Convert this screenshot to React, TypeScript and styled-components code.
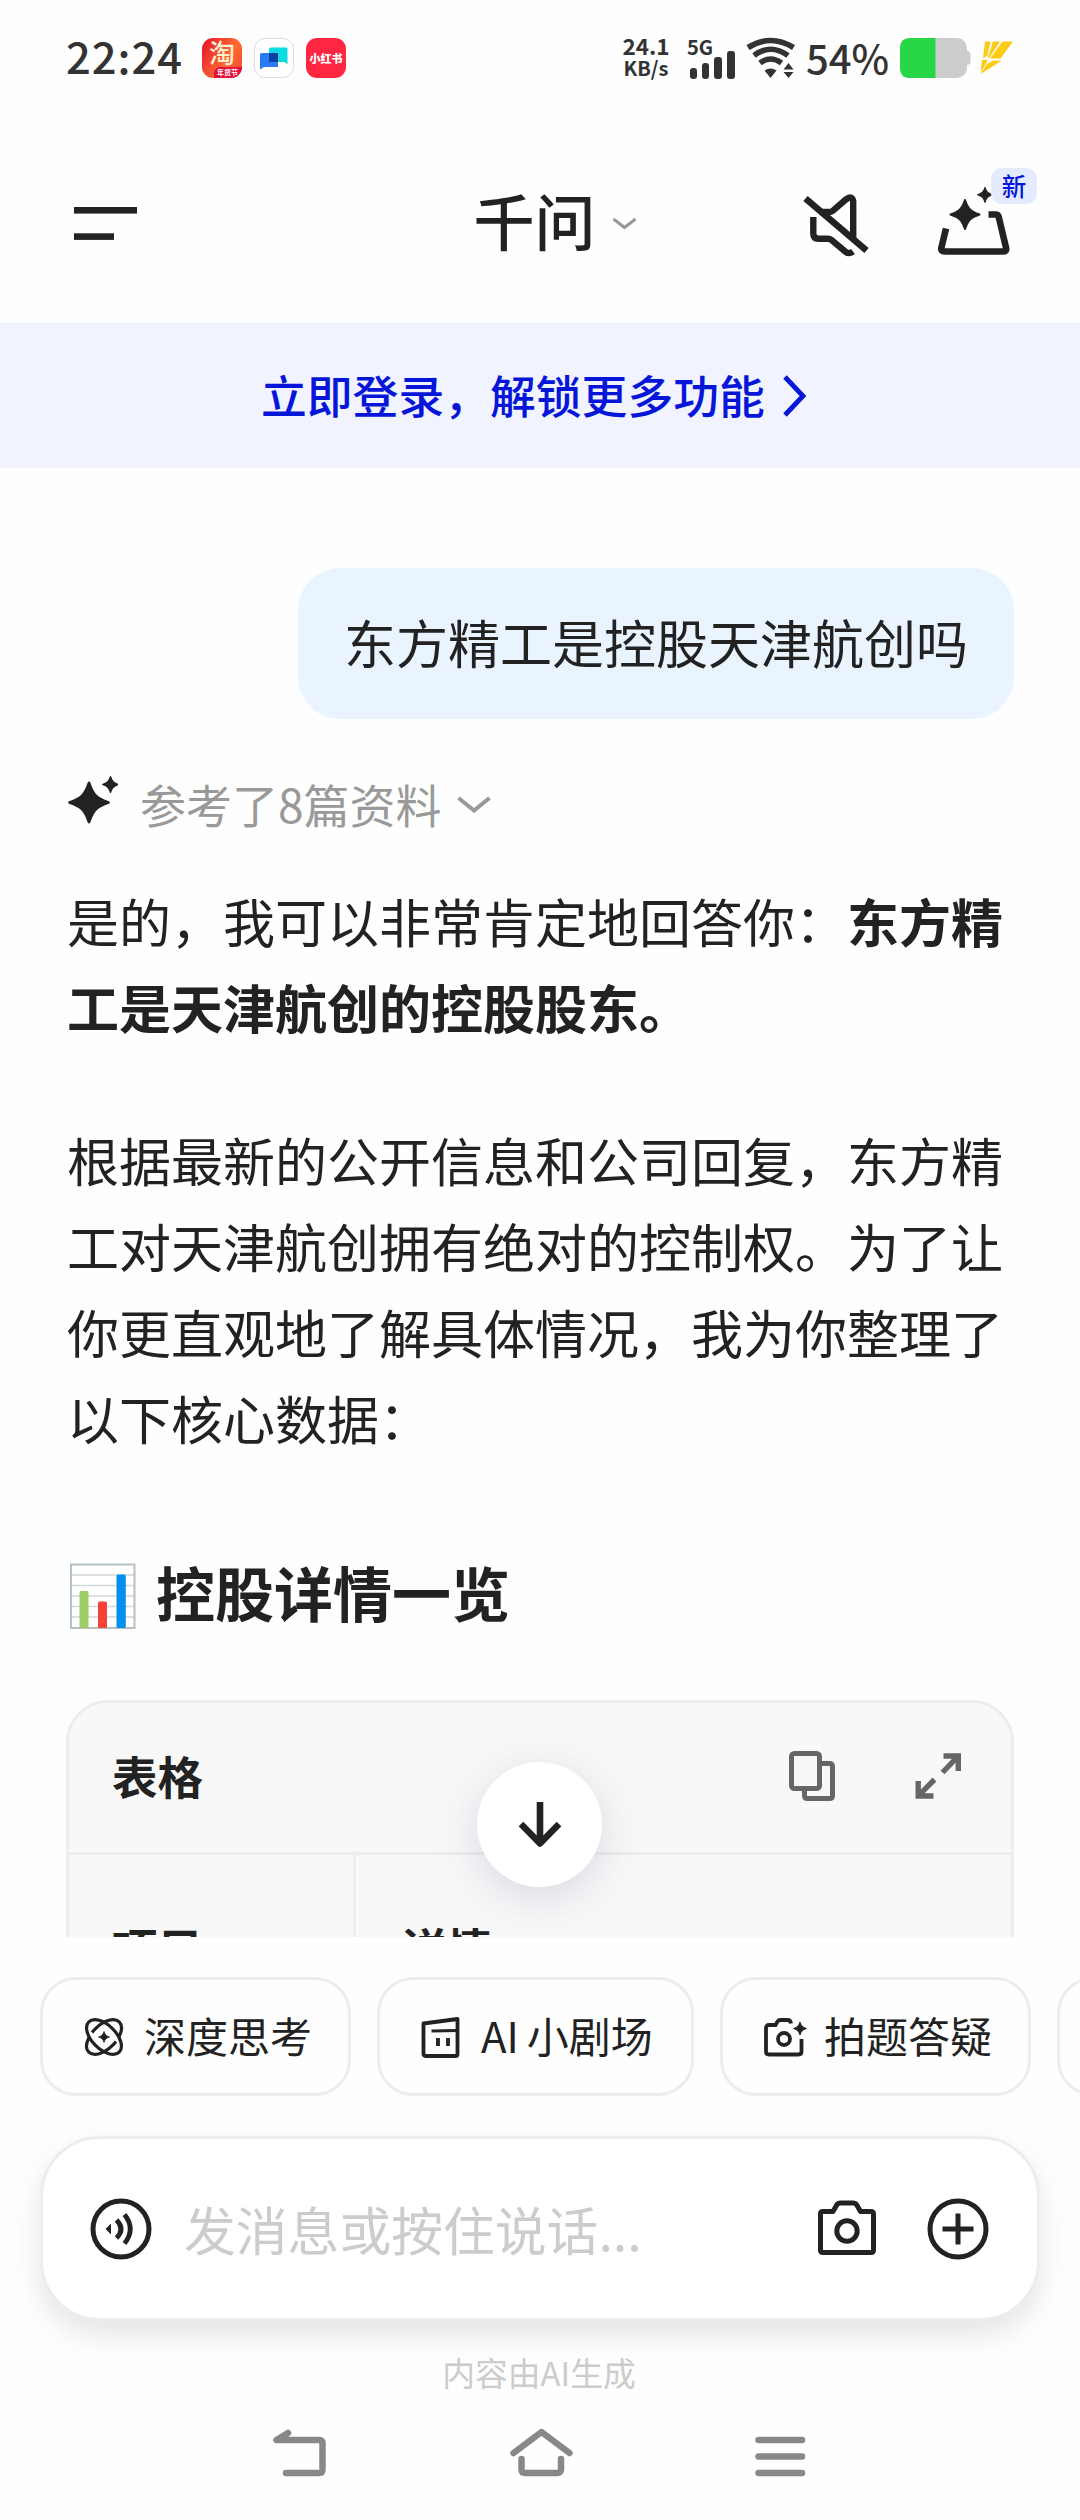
import React from "react";
import styled, { createGlobalStyle } from "styled-components";

const ink = "#222222";
const line = "#ededed";

const GlobalStyle = createGlobalStyle`
  * { box-sizing: border-box; }
  body {
    margin: 0;
    background: #fff;
    color: ${ink};
    font-family: "Noto Sans CJK SC", "Noto Sans", sans-serif;
  }
  svg { display: block; flex: none; }
`;

const Screen = styled.main`
  width: 1080px;
  height: 2520px;
  display: flex;
  flex-direction: column;
  overflow: hidden;
  background: #fefefe;
`;

/* Status bar */
const StatusBar = styled.div`
  height: 116px;
  padding: 0 66px;
  display: flex;
  justify-content: space-between;
  align-items: center;
  color: #333;
`;
const StatusGroup = styled.div`
  display: flex;
  align-items: center;
  height: 116px;
`;
const Clock = styled.span`
  width: 136px;
  padding-bottom: 5px;
  font-size: 43.5px;
  font-weight: 500;
  line-height: 64px;
  letter-spacing: 1px;
  white-space: nowrap;
`;
const AppIcon = styled.span<{ $bg: string; $ring?: boolean }>`
  width: 40px;
  height: 40px;
  margin-right: 12px;
  border-radius: 11px;
  overflow: hidden;
  background: ${(p) => p.$bg};
  border: ${(p) => (p.$ring ? "1px solid #ddd" : "0")};
  display: flex;
  flex-direction: column;
  align-items: center;
  justify-content: center;
`;
const TaoGlyph = styled.span`
  height: 29px;
  font-size: 26px;
  line-height: 28px;
  font-weight: 500;
  color: #fff0cf;
`;
const TaoTag = styled.span`
  align-self: flex-end;
  width: 28px;
  height: 11px;
  padding-left: 3px;
  border-top-left-radius: 6px;
  background: #e3103c;
  color: #fff;
  font-size: 7px;
  line-height: 10px;
  font-weight: 700;
  white-space: nowrap;
`;
const RedGlyph = styled.span`
  font-size: 11px;
  line-height: 18px;
  font-weight: 900;
  color: #fff;
  white-space: nowrap;
`;
const NetSpeed = styled.span`
  display: flex;
  flex-direction: column;
  align-items: center;
  width: 48px;
  margin-right: 17px;
  padding-bottom: 5px;
  font-weight: 700;
  font-size: 22.5px;
  line-height: 24px;
  white-space: nowrap;
`;
const NetUnit = styled.span`
  font-size: 20px;
  line-height: 22px;
`;
const Signal = styled.span`
  width: 48px;
  margin-right: 11px;
  display: flex;
  flex-direction: column;
`;
const SignalLabel = styled.span`
  height: 13px;
  font-size: 20px;
  line-height: 17px;
  font-weight: 700;
`;
const Percent = styled.span`
  width: 104px;
  padding: 0 0 3px 10px;
  font-size: 40px;
  line-height: 60px;
  font-weight: 500;
  white-space: nowrap;
`;

/* App header */
const Header = styled.header`
  height: 207px;
  padding: 0 70px 0 74px;
  display: grid;
  grid-template-columns: 1fr auto 1fr;
  align-items: start;
`;
const MenuButton = styled.div`
  padding-top: 90px;
`;
const TitleBox = styled.div`
  display: flex;
  gap: 16px;
  align-items: center;
  padding: 62px 0 0 26px;
  height: 152px;
`;
const Title = styled.h1`
  margin: 0;
  padding-bottom: 6px;
  font-size: 61px;
  line-height: 90px;
  font-weight: 500;
`;
const HeaderActions = styled.div`
  display: flex;
  justify-content: flex-end;
  gap: 68px;
  padding-top: 70px;
`;
const TrayButton = styled.div`
  position: relative;
`;
const NewBadge = styled.span`
  position: absolute;
  left: 53px;
  top: -18px;
  width: 46px;
  height: 36px;
  border-radius: 11px;
  background: #e5ebfe;
  color: #0616d8;
  font-size: 24.5px;
  line-height: 35px;
  font-weight: 500;
  text-align: center;
`;

const LoginBanner = styled.div`
  height: 145px;
  padding-left: 261px;
  display: flex;
  align-items: center;
  gap: 17px;
  background: #f1f3ff;
  color: #0616d8;
  font-size: 45.8px;
  line-height: 68px;
  font-weight: 500;
  white-space: nowrap;
`;
const BannerText = styled.span`
  padding-bottom: 3px;
`;

/* Conversation */
const Chat = styled.section`
  position: relative;
  height: 1469px;
  flex: none;
  padding: 100px 66px 0;
  overflow: hidden;
`;
const Bubble = styled.div`
  width: fit-content;
  height: 151px;
  margin-left: auto;
  padding: 0 46px;
  border-radius: 42px;
  background: #eaf4ff;
  font-size: 52px;
  line-height: 148px;
  white-space: nowrap;
`;
const Sources = styled.div`
  height: 70px;
  margin-top: 50px;
  display: flex;
  align-items: center;
  color: #999;
  font-size: 46px;
  line-height: 66px;
  white-space: nowrap;
`;
const SparkBox = styled.span`
  padding-bottom: 11px;
`;
const SourcesText = styled.span`
  margin: 0 15px 0 22px;
  padding-bottom: 2px;
`;
const Paragraph = styled.p<{ $top: number }>`
  margin: ${(p) => p.$top}px 0 0 1px;
  font-size: 52px;
  line-height: 86px;
`;
const Strong = styled.strong`
  font-weight: 700;
`;
const SectionTitle = styled.h2`
  margin: 86px 0 0 3px;
  height: 90px;
  display: flex;
  align-items: center;
  gap: 19px;
  font-size: 59px;
  line-height: 86px;
  font-weight: 700;
  & > svg {
    margin-top: 10px;
  }
`;
const TableCard = styled.div`
  margin-top: 63px;
  height: 320px;
  border: 3px solid ${line};
  border-radius: 42px 42px 0 0;
  background: #f8f8f8;
  font-size: 45.5px;
  font-weight: 700;
`;
const TableHead = styled.div`
  height: 152px;
  padding: 0 49px 0 43px;
  display: flex;
  justify-content: space-between;
  border-bottom: 3px solid ${line};
  line-height: 144px;
`;
const TableTools = styled.div`
  display: flex;
  gap: 80px;
  padding-top: 48px;
`;
const TableRow = styled.div`
  display: grid;
  grid-template-columns: 284px 1fr;
  height: 165px;
`;
const Cell = styled.div`
  padding: 57px 0 0 43px;
  line-height: 70px;
  & + & {
    padding-left: 45px;
    border-left: 3px solid ${line};
  }
`;
const ScrollDown = styled.div`
  position: absolute;
  left: 477px;
  top: 1294px;
  width: 125px;
  height: 125px;
  border-radius: 50%;
  background: #fff;
  box-shadow: 0 10px 44px rgba(60, 70, 130, 0.17);
  display: flex;
  align-items: center;
  justify-content: center;
`;

/* Composer */
const Chips = styled.div`
  height: 119px;
  margin: 40px 0 0 40px;
  display: flex;
  gap: 26px;
  flex: none;
`;
const Chip = styled.div<{ $w: number; $gap?: number }>`
  flex: none;
  width: ${(p) => p.$w}px;
  height: 119px;
  padding-left: 41px;
  display: flex;
  align-items: center;
  gap: ${(p) => p.$gap ?? 20}px;
  border: 3px solid ${line};
  border-radius: 36px;
  font-size: 42px;
  line-height: 60px;
  white-space: nowrap;
`;
const ChipText = styled.span`
  padding-bottom: 3px;
`;
const ChipLatin = styled.span`
  margin-right: 8px;
`;
const Composer = styled.div`
  flex: none;
  width: 1000px;
  height: 185px;
  margin: 40px 0 0 40px;
  padding: 0 48px 0 47px;
  display: flex;
  align-items: center;
  border: 3px solid ${line};
  border-radius: 60px;
  background: #fff;
  box-shadow: 0 14px 30px rgba(0, 0, 0, 0.1);
`;
const Placeholder = styled.span`
  flex: 1;
  padding-left: 32px;
  color: #ccc;
  font-size: 51.8px;
  line-height: 80px;
  white-space: nowrap;
`;
const ComposerTools = styled.div`
  display: flex;
  gap: 50px;
`;
const Disclaimer = styled.div`
  height: 50px;
  margin-top: 26px;
  padding-right: 2px;
  text-align: center;
  color: #ccc;
  font-size: 32.8px;
  line-height: 50px;
`;
const NavBar = styled.nav`
  height: 60px;
  margin-top: 26px;
  padding: 0 272px 0 271px;
  display: flex;
  justify-content: space-between;
  align-items: center;
`;

const Star = ({ cx, cy, r, fill = ink }: { cx: number; cy: number; r: number; fill?: string }) => {
  const k = r * 0.27;
  return (
    <path
      fill={fill}
      stroke={fill}
      strokeWidth={r * 0.14}
      strokeLinejoin="round"
      d={`M${cx} ${cy - r}C${cx + k * 0.8} ${cy - k * 1.4} ${cx + k * 1.4} ${cy - k * 0.8} ${cx + r} ${cy}C${cx + k * 1.4} ${cy + k * 0.8} ${cx + k * 0.8} ${cy + k * 1.4} ${cx} ${cy + r}C${cx - k * 0.8} ${cy + k * 1.4} ${cx - k * 1.4} ${cy + k * 0.8} ${cx - r} ${cy}C${cx - k * 1.4} ${cy - k * 0.8} ${cx - k * 0.8} ${cy - k * 1.4} ${cx} ${cy - r}Z`}
    />
  );
};

const SignalBars = () => (
  <svg width="48" height="28" viewBox="0 0 48 28" fill="#333">
    <rect x="3" y="17" width="7" height="11" rx="3" />
    <rect x="15" y="12" width="7" height="16" rx="3" />
    <rect x="27" y="6" width="8" height="22" rx="3" />
    <rect x="40" y="0" width="8" height="28" rx="3" />
  </svg>
);

const Wifi = () => (
  <svg width="50" height="42" viewBox="0 0 50 42" fill="none" stroke="#333" strokeWidth="5.6">
    <path d="M2 10.500Q24.500 -3.500 47.500 10.500" />
    <path d="M8 18.500Q24.500 6 42 18.500" />
    <path d="M14 26Q24.500 18 35.500 26" />
    <path d="M18.500 33.500Q24.500 29.500 30.500 33.500L24.500 41Z" fill="#333" stroke="none" />
    <path d="M42.500 26L47.500 32.500H37.500ZM42.500 41L37.500 35H47.500Z" fill="#333" stroke="none" />
  </svg>
);

const Battery = () => (
  <svg width="80" height="40" viewBox="0 0 80 40">
    <rect x="0" y="0" width="67" height="40" rx="10" fill="#ccc" />
    <path d="M67 13q3.500 0 3.500 4v6q0 4-3.500 4z" fill="#ccc" />
    <path d="M10 0H35.500V40H10Q0 40 0 30V10Q0 0 10 0Z" fill="#28d745" />
  </svg>
);

const Bolt = () => (
  <svg width="34" height="34" viewBox="0 0 34 34" fill="#fccb16">
    <path d="M5 0.500H10.500L7.500 14.500L3 17.500Z" />
    <path d="M13 0.500H20L9 17.500L8 16Z" />
    <path d="M22.500 0.500H33L20.500 17.500H10Z" />
    <path d="M22 19.500L0.500 33L7 23L13 19.500Z" />
    <path d="M2 19H8L0.500 32Z" />
  </svg>
);

const ChatLogo = () => (
  <svg width="28" height="23" viewBox="0 0 28 23">
    <path d="M0 7.500Q0 6 1.500 6H18V20H4L0 22.500Z" fill="#2a7cf6" />
    <path d="M9 2.500Q9 0.500 11 0.500H26Q27.500 0.500 27.500 2V17L24 15H9Z" fill="#0bdbe0" />
    <path d="M9 6H18V15H9Z" fill="#0b3fa0" />
  </svg>
);

const MutedSpeaker = () => (
  <svg width="67" height="74" viewBox="0 0 67 74" fill="none" stroke={ink} strokeWidth="6.400">
    <path d="M2.500 12.500L63.500 64.500" strokeWidth="6.600" />
    <path d="M17 26H26.500Q28.500 26 30 24.700L42.500 13.800Q48.800 8.800 50.200 15V52" />
    <path d="M10.300 31V47.500Q10.300 52.800 15.500 52.800H25Q27 52.800 28.500 54L42.500 65.700Q46 68.500 50 65.500" />
  </svg>
);

const Tray = () => (
  <svg width="72" height="70" viewBox="0 0 72 70" fill="none">
    <path
      d="M8 42.500L3.300 62Q2.800 65.500 6.500 65.500H65.500Q69 65.500 68 61.500L60.600 30.500Q60 28.500 57.500 28.500H50.500"
      stroke={ink}
      strokeWidth="6.600"
    />
    <Star cx={27} cy={28.5} r={14.5} />
    <Star cx={47} cy={8.8} r={7.5} />
  </svg>
);

const Chevron = ({ w, h, sw }: { w: number; h: number; sw: number }) => (
  <svg width={w} height={h} viewBox={`0 0 ${w} ${h}`} fill="none" stroke="#999" strokeWidth={sw}>
    <path d={`M1.500 2L${w / 2} ${h - 2.5}L${w - 1.5} 2`} />
  </svg>
);

const SparkLogo = () => (
  <svg width="52" height="50" viewBox="0 0 52 50">
    <Star cx={23} cy={28.5} r={19.5} />
    <Star cx={44.5} cy={10.5} r={8} />
  </svg>
);

const BarChartEmoji = () => (
  <svg width="68" height="68" viewBox="0 0 68 68">
    <rect x="1" y="1" width="65" height="65" fill="#fff" />
    <path d="M1 12H66M1 22.500H66M1 33H66M1 43.500H66M1 54H66" stroke="#cfd8dc" strokeWidth="1.600" />
    <path d="M2 1.500H65.500V65H2Z" fill="none" stroke="#b4c0c6" strokeWidth="2" />
    <rect x="10.500" y="28" width="9" height="37" rx="1.500" fill="#9ccc65" />
    <rect x="29" y="38.500" width="9" height="26.500" rx="1.500" fill="#f44336" />
    <rect x="47.500" y="11.500" width="9.300" height="53.500" rx="1.500" fill="#0390ee" />
  </svg>
);

const CopyIcon = () => (
  <svg width="46" height="50" viewBox="0 0 46 50" fill="none" stroke="#666" strokeWidth="5">
    <rect x="2.500" y="2.500" width="28" height="35" rx="3" />
    <path d="M33 12.500H40.500Q43.500 12.500 43.500 15.500V44.500Q43.500 47.500 40.500 47.500H18.500Q15.500 47.500 15.500 44.500V40" />
  </svg>
);

const ExpandIcon = () => (
  <svg width="47" height="50" viewBox="0 0 47 50" fill="none" stroke="#666" strokeWidth="5.400">
    <path d="M28.500 5H43.300V20M43 5.300L27.500 21.500" />
    <path d="M3.200 30V45H18.500M3.500 44.700L19.500 28.500" />
  </svg>
);

const ArrowDown = () => (
  <svg width="44" height="48" viewBox="0 0 44 48" fill="none" stroke={ink} strokeWidth="6.600">
    <path d="M22 1V42M3 23L22 42.500L41 23" strokeLinejoin="round" />
  </svg>
);

const AtomIcon = () => (
  <svg width="40" height="40" viewBox="0 0 40 40" fill="none" stroke={ink} strokeWidth="3.200">
    <ellipse cx="20" cy="20" rx="21.500" ry="12" transform="rotate(45 20 20)" />
    <ellipse
      cx="20"
      cy="20"
      rx="21.500"
      ry="12"
      transform="rotate(-45 20 20)"
      pathLength={100}
      strokeDasharray="15 5 45 5 30 0"
    />
    <Star cx={20} cy={20} r={5.5} />
  </svg>
);

const TheaterIcon = () => (
  <svg width="40" height="42" viewBox="0 0 40 42" fill="none" stroke={ink} strokeWidth="3.800">
    <path d="M2.500 7.500L36.500 3V38Q36.500 40 34.500 40H4.500Q2.500 40 2.500 38Z" strokeLinejoin="round" />
    <path d="M10.500 15L37 14.500" strokeWidth="2.800" />
    <path d="M17 22V30M27 22V30" />
  </svg>
);

const PhotoQuestionIcon = () => (
  <svg width="43" height="40" viewBox="0 0 43 40" fill="none" stroke={ink} strokeWidth="3.800">
    <path d="M27 6.500Q26.500 3 23.500 3H16.500Q14.500 3 13.500 4.500L11.500 8H5Q2 8 2 11V34.500Q2 37.500 5 37.500H34.500Q37.500 37.500 37.500 34.500V22" />
    <circle cx="20" cy="22" r="6" />
    <Star cx={36} cy={11.5} r={6.5} />
  </svg>
);

const VoiceIcon = () => (
  <svg width="62" height="62" viewBox="0 0 62 62" fill="none" stroke={ink} strokeWidth="5">
    <circle cx="31" cy="31" r="28" />
    <path d="M21 25.500V36.500L15.500 31Z" fill={ink} stroke="none" />
    <path d="M26.500 22Q35.500 31 26.500 40M34.500 16.500Q46 31 34.500 45.500" strokeWidth="4.800" />
  </svg>
);

const CameraIcon = () => (
  <svg width="60" height="60" viewBox="0 0 60 60" fill="none" stroke={ink} strokeWidth="5">
    <path
      d="M3.500 52V16Q3.500 13.500 6 13.500H16L20 6.500Q21 5 23 5H36.500Q38.500 5 39.500 6.500L43.500 13.500H53.500Q56.500 13.500 56.500 16V52Q56.500 54.500 54 54.500H6Q3.500 54.500 3.500 52Z"
      strokeLinejoin="round"
    />
    <circle cx="30" cy="33" r="10.200" />
  </svg>
);

const PlusIcon = () => (
  <svg width="62" height="62" viewBox="0 0 62 62" fill="none" stroke={ink} strokeWidth="5">
    <circle cx="31" cy="31" r="28" />
    <path d="M31 15.500V46.500M15.500 31H46.500" />
  </svg>
);

const navStroke = { fill: "none", stroke: "#888", strokeWidth: 6.5, strokeLinecap: "round", strokeLinejoin: "round" } as const;

const App = () => (
  <>
    <GlobalStyle />
    <Screen>
      <StatusBar>
        <StatusGroup>
          <Clock>22:24</Clock>
          <AppIcon $bg="linear-gradient(120deg, #e3122b, #ff6a32 60%, #f2452f)">
            <TaoGlyph>淘</TaoGlyph>
            <TaoTag>年货节</TaoTag>
          </AppIcon>
          <AppIcon $bg="#fff" $ring>
            <ChatLogo />
          </AppIcon>
          <AppIcon $bg="#fe2641">
            <RedGlyph>小红书</RedGlyph>
          </AppIcon>
        </StatusGroup>
        <StatusGroup>
          <NetSpeed>
            24.1
            <NetUnit>KB/s</NetUnit>
          </NetSpeed>
          <Signal>
            <SignalLabel>5G</SignalLabel>
            <SignalBars />
          </Signal>
          <Wifi />
          <Percent>54%</Percent>
          <Battery />
          <Bolt />
        </StatusGroup>
      </StatusBar>

      <Header>
        <MenuButton>
          <svg width="64" height="36" viewBox="0 0 64 36" fill={ink}>
            <rect x="0" y="1" width="63" height="6.600" />
            <rect x="0" y="27.300" width="40" height="6.600" />
          </svg>
        </MenuButton>
        <TitleBox>
          <Title>千问</Title>
          <Chevron w={25} h={13} sw={3} />
        </TitleBox>
        <HeaderActions>
          <MutedSpeaker />
          <TrayButton>
            <Tray />
            <NewBadge>新</NewBadge>
          </TrayButton>
        </HeaderActions>
      </Header>

      <LoginBanner>
        <BannerText>立即登录，解锁更多功能</BannerText>
        <svg width="26" height="42" viewBox="0 0 26 42" fill="none" stroke="#0616d8" strokeWidth="4.800">
          <path d="M3 2L21 21L3 40" />
        </svg>
      </LoginBanner>

      <Chat>
        <Bubble>东方精工是控股天津航创吗</Bubble>
        <Sources>
          <SparkBox>
            <SparkLogo />
          </SparkBox>
          <SourcesText>参考了8篇资料</SourcesText>
          <Chevron w={34} h={17} sw={4} />
        </Sources>
        <Paragraph $top={39}>
          是的，我可以非常肯定地回答你：<Strong>东方精工是天津航创的控股股东。</Strong>
        </Paragraph>
        <Paragraph $top={67}>
          根据最新的公开信息和公司回复，东方精工对天津航创拥有绝对的控制权。为了让你更直观地了解具体情况，我为你整理了以下核心数据：
        </Paragraph>
        <SectionTitle>
          <BarChartEmoji />
          控股详情一览
        </SectionTitle>
        <TableCard>
          <TableHead>
            表格
            <TableTools>
              <CopyIcon />
              <ExpandIcon />
            </TableTools>
          </TableHead>
          <TableRow>
            <Cell>项目</Cell>
            <Cell>详情</Cell>
          </TableRow>
        </TableCard>
        <ScrollDown>
          <ArrowDown />
        </ScrollDown>
      </Chat>

      <Chips>
        <Chip $w={311}>
          <AtomIcon />
          <ChipText>深度思考</ChipText>
        </Chip>
        <Chip $w={317}>
          <TheaterIcon />
          <ChipText>
            <ChipLatin>AI</ChipLatin>小剧场
          </ChipText>
        </Chip>
        <Chip $w={311} $gap={17}>
          <PhotoQuestionIcon />
          <ChipText>拍题答疑</ChipText>
        </Chip>
        <Chip $w={311} />
      </Chips>

      <Composer>
        <VoiceIcon />
        <Placeholder>发消息或按住说话...</Placeholder>
        <ComposerTools>
          <CameraIcon />
          <PlusIcon />
        </ComposerTools>
      </Composer>

      <Disclaimer>内容由AI生成</Disclaimer>

      <NavBar>
        <svg width="58" height="50" viewBox="0 0 58 50" {...navStroke}>
          <path d="M17 5L5.500 12H48Q51.500 12 51.500 15.500V41.500Q51.500 45 48 45H15" />
        </svg>
        <svg width="64" height="50" viewBox="0 0 64 50" {...navStroke}>
          <path d="M3.500 25L31.500 4L59.500 25M11.500 31V41.500Q11.500 45 15.500 45H47Q51 45 51 41V31" />
        </svg>
        <svg width="54" height="50" viewBox="0 0 54 50" {...navStroke}>
          <path d="M4.500 12H48M4.500 28.500H48M4.500 45H48" />
        </svg>
      </NavBar>
    </Screen>
  </>
);

export default App;
